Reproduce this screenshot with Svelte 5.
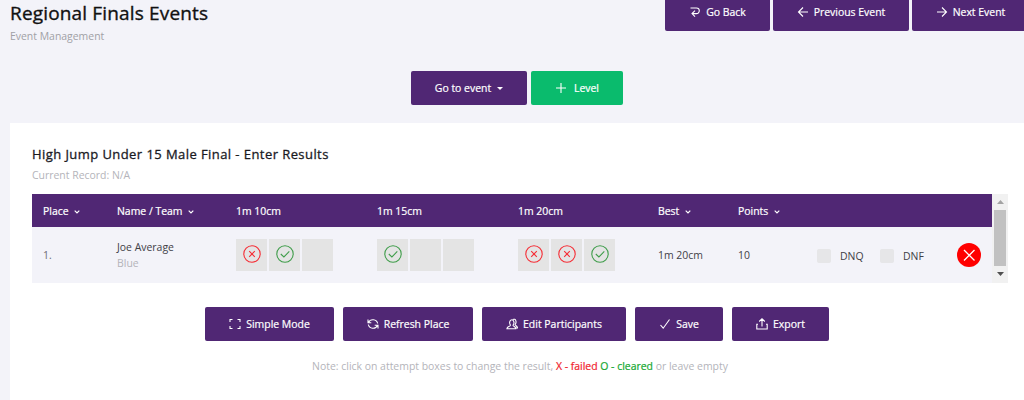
<script lang="ts">
  type Attempt = 'failed' | 'cleared' | '';

  const heights: { label: string; attempts: Attempt[] }[] = [
    { label: '1m 10cm', attempts: ['failed', 'cleared', ''] },
    { label: '1m 15cm', attempts: ['cleared', '', ''] },
    { label: '1m 20cm', attempts: ['failed', 'failed', 'cleared'] }
  ];

  const icons = {
    back: 'M1.5 2h6a2.7 2.7 0 0 1 0 5.6H3.2M6 4.6 3 7.6l3 3',
    left: 'M11 6H1.5M6 1.5 1.5 6 6 10.5',
    right: 'M1 6h9.5M6 1.5 10.5 6 6 10.5',
    plus: 'M6 1v10M1 6h10',
    frame: 'M1 4V1.5h2.5M8.5 1.5H11V4M11 8v2.5H8.5M3.5 10.5H1V8',
    refresh: 'M1 1.5v3.3h3.3M1.5 4.5a4.9 4.9 0 0 1 9.2 1M11 10.5V7.2H7.7M10.5 7.5a4.9 4.9 0 0 1-9.2-1',
    users: 'M4.6 7.2C3 5.5 3.4 1.8 5.8 1.8s2.8 3.7 1.2 5.4c0 1.2 2.8 1 2.8 3.6H.9c0-2.6 3.7-2.4 3.7-3.6M6.8 1.5c3-1.5 4.2 2.7 2.3 5 0 1.3 2.4 1.4 2.4 3.5H10',
    check: 'M1.5 7 4.2 10.2 10.5 1.5',
    export: 'M2 6.2H.8v4.8h10.4V6.2H10M6 8.5V1M3.2 3.5 6 .8l2.8 2.7'
  };

  const actions: { icon: keyof typeof icons; label: string; width: number }[] = [
    { icon: 'frame', label: 'Simple Mode', width: 129 },
    { icon: 'refresh', label: 'Refresh Place', width: 130 },
    { icon: 'users', label: 'Edit Participants', width: 144 },
    { icon: 'check', label: 'Save', width: 88 },
    { icon: 'export', label: 'Export', width: 97 }
  ];
</script>

{#snippet glyph(name: keyof typeof icons)}
  <svg class="icon" viewBox="0 0 12 12"><path d={icons[name]} /></svg>
{/snippet}

{#snippet sort()}
  <svg class="sort" viewBox="0 0 6 4"><path d="M.7.6 3 2.9 5.3.6" /></svg>
{/snippet}

<div class="page">
  <header class="top">
    <div>
      <h1>Regional Finals Events</h1>
      <p class="subtitle">Event Management</p>
    </div>
    <nav class="nav-buttons">
      <button class="btn back">{@render glyph('back')}Go Back</button>
      <button class="btn previous">{@render glyph('left')}Previous Event</button>
      <button class="btn next">{@render glyph('right')}Next Event</button>
    </nav>
  </header>

  <div class="toolbar">
    <button class="btn goto">Go to event<span class="caret"></span></button>
    <button class="btn level">{@render glyph('plus')}Level</button>
  </div>

  <main class="card">
    <h2>High Jump Under 15 Male Final - Enter Results</h2>
    <p class="record">Current Record: N/A</p>

    <div class="results">
      <div class="table">
        <div class="row head">
          <span>Place {@render sort()}</span>
          <span>Name / Team {@render sort()}</span>
          {#each heights as height}
            <span>{height.label}</span>
          {/each}
          <span>Best {@render sort()}</span>
          <span>Points {@render sort()}</span>
        </div>
        <div class="row body">
          <span class="place">1.</span>
          <div class="athlete">
            <div>Joe Average</div>
            <div class="team">Blue</div>
          </div>
          {#each heights as height}
            <div class="attempts">
              {#each height.attempts as attempt}
                <div class="attempt">
                  {#if attempt}
                    <svg class={attempt} viewBox="0 0 18 18">
                      <circle cx="9" cy="9" r="8.2" />
                      {#if attempt === 'failed'}
                        <path d="m6.2 6.2 5.6 5.6M11.8 6.2l-5.6 5.6" />
                      {:else}
                        <path d="m4.8 9 3.1 3 5.4-5.6" />
                      {/if}
                    </svg>
                  {/if}
                </div>
              {/each}
            </div>
          {/each}
          <span>1m 20cm</span>
          <span>10</span>
          <div class="flags">
            <label class="dnq"><i class="box"></i>DNQ</label>
            <label><i class="box"></i>DNF</label>
          </div>
          <button class="remove" aria-label="Remove">
            <svg viewBox="0 0 24 24"><path d="m7 7 10.5 10.5M17.5 7 7 17.5" /></svg>
          </button>
        </div>
      </div>
      <div class="scrollbar">
        <svg class="up" viewBox="0 0 7 4"><path d="M0 4 3.5 0 7 4z" /></svg>
        <div class="thumb"></div>
        <svg class="down" viewBox="0 0 7 4"><path d="M0 0h7L3.5 4z" /></svg>
      </div>
    </div>

    <div class="actions">
      {#each actions as action}
        <button class="btn" style="width: {action.width}px">{@render glyph(action.icon)}{action.label}</button>
      {/each}
    </div>

    <p class="note">
      Note: click on attempt boxes to change the result, <b class="x">X - failed</b> <b class="o">O - cleared</b> or leave empty
    </p>
  </main>
</div>

<style>
  :global(body) {
    margin: 0;
    overflow: hidden;
  }

  .page {
    height: 400px;
    overflow: hidden;
    background: #f3f3f9;
    font-family: 'Open Sans', sans-serif;
    font-size: 10.45px;
    line-height: 16px;
    color: #3f4047;
    box-sizing: border-box;
  }

  h1, h2, p {
    margin: 0;
  }

  .top {
    display: flex;
    justify-content: space-between;
    height: 71px;
    padding-left: 10px;
  }

  h1 {
    font-size: 19px;
    line-height: 26px;
    font-weight: 500;
    letter-spacing: 0.16px;
    -webkit-text-stroke: 0.35px;
    color: #111;
  }

  .subtitle {
    margin-top: 2px;
    color: #a1a1a6;
  }

  .nav-buttons {
    display: flex;
    gap: 3px;
    margin: -4px -5px 0 0;
  }

  .btn {
    display: flex;
    align-items: center;
    justify-content: center;
    flex-shrink: 0;
    height: 34px;
    padding: 0;
    border: 0;
    border-radius: 2px;
    background: #502774;
    color: #fff;
    font: 500 10.45px/16px 'Open Sans', sans-serif;
    white-space: nowrap;
  }

  .icon {
    width: 12px;
    height: 12px;
    margin-right: 5px;
    fill: none;
    stroke: currentColor;
    stroke-width: 1.1;
  }

  .nav-buttons .btn {
    height: 35px;
    padding-bottom: 3px;
    box-sizing: border-box;
  }

  .back { width: 105px; }
  .previous { width: 136px; }
  .next { width: 117px; }

  .toolbar {
    display: flex;
    justify-content: center;
    gap: 4px;
    height: 52px;
    padding-left: 10px;
  }

  .goto { width: 116px; }

  .caret {
    margin-left: 6px;
    border: 3px solid transparent;
    border-top-color: #fff;
    border-bottom: 0;
  }

  .level {
    width: 92px;
    background: #0abb6d;
  }

  .level .icon {
    margin-right: 7px;
  }

  .card {
    height: 277px;
    margin-left: 10px;
    padding: 21px 16px 0 22px;
    background: #fff;
    box-sizing: border-box;
  }

  h2 {
    font-size: 13px;
    line-height: 20px;
    font-weight: 500;
    letter-spacing: 0.43px;
    -webkit-text-stroke: 0.3px;
    color: #1a1a1f;
  }

  .record {
    margin-top: 3px;
    color: #b4b4ba;
  }

  .results {
    display: flex;
    height: 89px;
    margin-top: 11px;
  }

  .table {
    width: 960px;
    background: #f3f3f9;
  }

  .row {
    display: grid;
    grid-template-columns: 74px 119px 141px 141px 140px 80px 79px 140px 1fr;
    align-items: center;
    padding-left: 11px;
  }

  .head {
    height: 32px;
    padding-top: 1px;
    background: #502774;
    color: #fff;
    font-weight: 500;
  }

  .btn,
  .head,
  .note b {
    -webkit-text-stroke: 0.2px;
  }

  .sort {
    width: 6px;
    height: 4px;
    margin-left: 3px;
    vertical-align: 1px;
    fill: none;
    stroke: currentColor;
    stroke-width: 1.2;
  }

  .body {
    height: 56px;
  }

  .place {
    color: #6c6c74;
  }

  .team {
    color: #b4b4ba;
  }

  .attempts {
    display: flex;
    gap: 2px;
    margin-top: -1px;
  }

  .attempt {
    display: flex;
    align-items: center;
    justify-content: center;
    width: 31px;
    height: 32px;
    background: #e4e4e4;
  }

  .attempt svg {
    width: 18px;
    height: 18px;
    margin-top: -2px;
    fill: none;
    stroke-width: 1.1;
  }

  .failed { stroke: #f52d35; }
  .cleared { stroke: #3f9d4a; }

  .flags {
    display: flex;
    padding-top: 2px;
  }

  .flags label {
    display: flex;
    align-items: center;
    gap: 9px;
  }

  .flags .dnq {
    width: 63px;
  }

  .box {
    width: 14px;
    height: 14px;
    border-radius: 2px;
    background: #e6e6e8;
  }

  .remove {
    width: 24px;
    height: 24px;
    padding: 0;
    border: 0;
    border-radius: 50%;
    background: #f00;
  }

  .remove svg {
    display: block;
    fill: none;
    stroke: #fff;
    stroke-width: 1.3;
  }

  .scrollbar {
    display: flex;
    flex-direction: column;
    align-items: center;
    width: 16px;
    background: #f1f1f1;
  }

  .scrollbar svg {
    width: 7px;
    height: 4px;
  }

  .up {
    margin: 6px 0;
    fill: #a3a3a3;
  }

  .thumb {
    width: 12px;
    height: 56px;
    background: #c1c1c1;
  }

  .down {
    margin-top: 6px;
    fill: #505050;
  }

  .actions {
    display: flex;
    justify-content: center;
    gap: 9px;
    margin-top: 24px;
    padding-right: 6px;
  }

  .note {
    margin-top: 17px;
    text-align: center;
    color: #b4b4ba;
  }

  .note b {
    font-weight: 500;
  }

  .note .x { color: #f0232c; }
  .note .o { color: #16a832; }
</style>
